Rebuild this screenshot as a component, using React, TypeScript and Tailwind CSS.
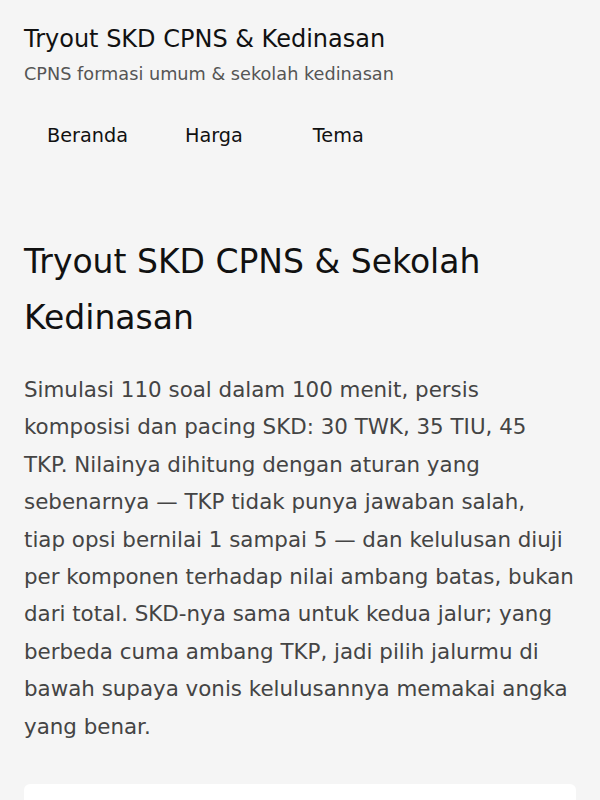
export default function App() {
  return (
    <div className="h-[800px] overflow-hidden bg-[#f5f5f5] font-['DejaVu_Sans',sans-serif] text-[#1a1a1a]">
      <header className="px-6 pt-[24px]">
        <h1 className="text-[24px] leading-[30px] text-[#111]">Tryout SKD CPNS &amp; Kedinasan</h1>
        <p className="mt-[8px] text-[17.7px] leading-[24px] text-[#555]">CPNS formasi umum &amp; sekolah kedinasan</p>
        <nav className="mt-[38px] flex items-center text-[19.25px] leading-[24px] text-[#111]">
          <a className="ml-[23px]">Beranda</a>
          <a className="ml-[57px]">Harga</a>
          <a className="ml-[70px]">Tema</a>
        </nav>
      </header>

      <main className="px-6 pt-[86px]">
        <h2 className="text-[33px] leading-[56px] text-[#111]">Tryout SKD CPNS &amp; Sekolah Kedinasan</h2>
        <p className="mt-[25px] text-[21.4px] leading-[37.4px] text-[#444]">
          Simulasi 110 soal dalam 100 menit, persis komposisi dan pacing SKD: 30 TWK, 35 TIU, 45 TKP. Nilainya dihitung
          dengan aturan yang sebenarnya — TKP tidak punya jawaban salah,
          <br />
          tiap opsi bernilai 1 sampai 5 — dan kelulusan diuji per komponen terhadap nilai ambang batas, bukan dari
          total. SKD-nya sama untuk kedua jalur; yang berbeda cuma ambang TKP, jadi pilih jalurmu di bawah supaya vonis
          kelulusannya memakai angka yang benar.
        </p>
        <div className="mt-[39px] h-[60px] rounded-t-md bg-white" />
      </main>
    </div>
  );
}
